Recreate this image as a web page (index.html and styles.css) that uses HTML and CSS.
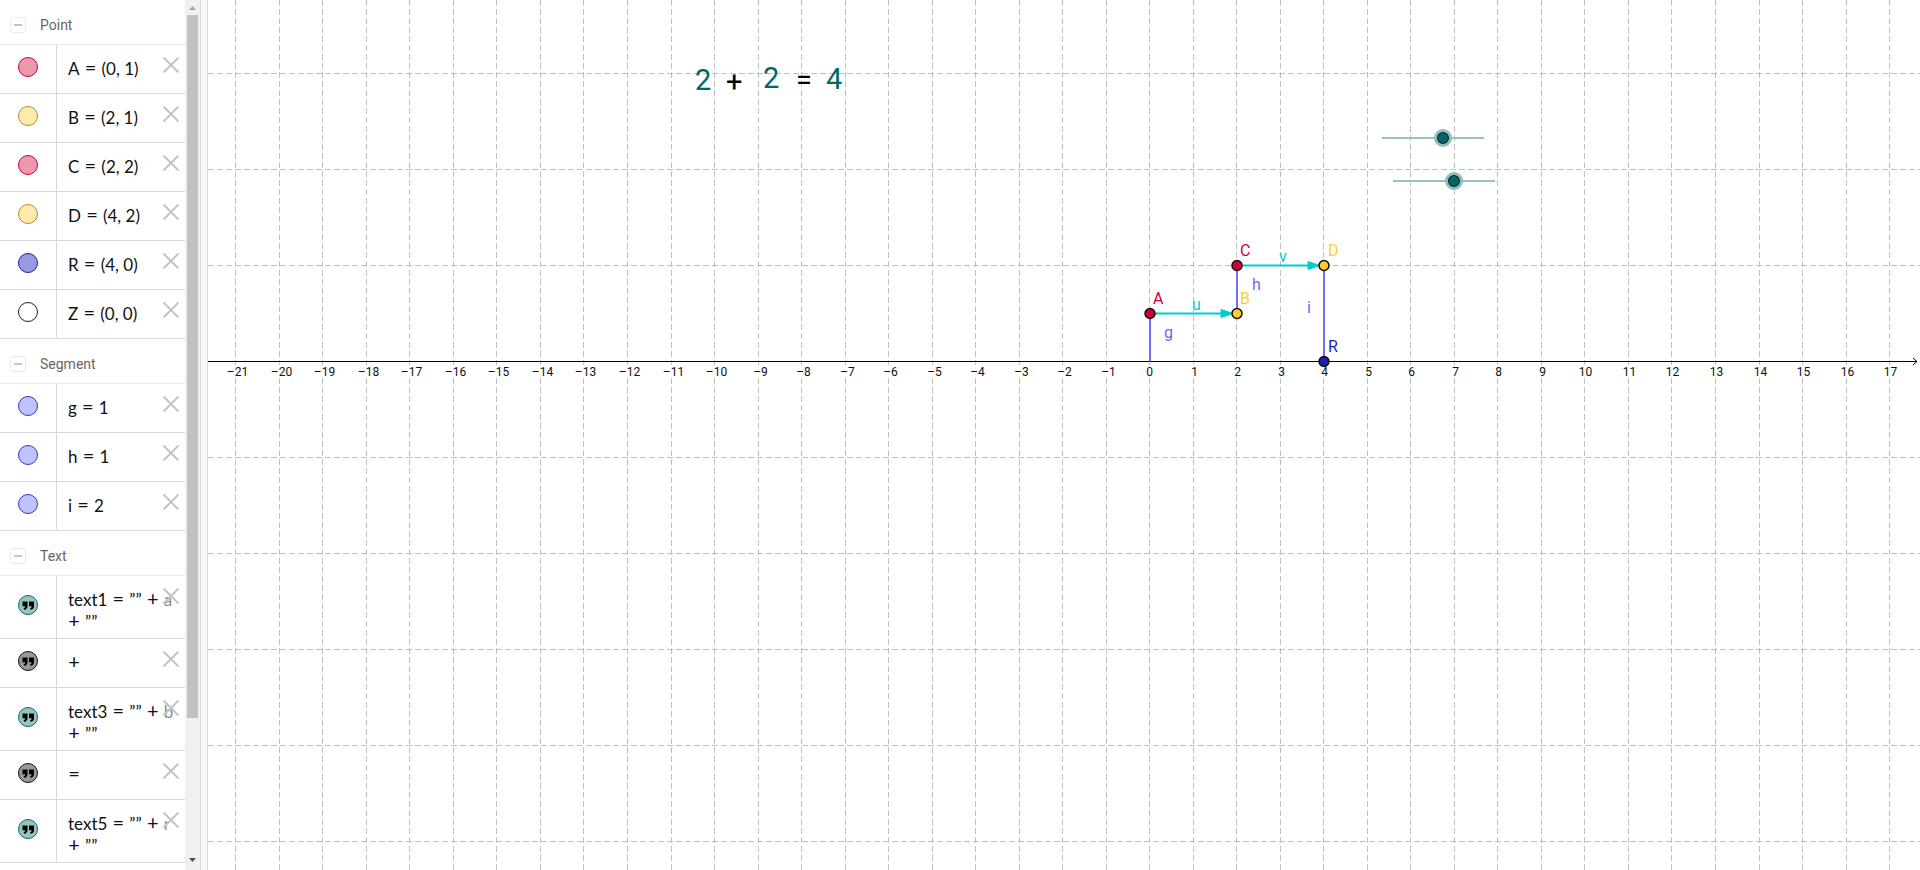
FILE: index.html
```html
<!DOCTYPE html>
<html lang="en">
<head>
<meta charset="utf-8">
<title>Graphing Calculator</title>
<link rel="stylesheet" href="styles.css">
</head>
<body>
<svg class="defs" aria-hidden="true">
  <symbol id="cross" viewBox="0 0 16 16"><path d="M.5.5l15 15M15.5.5l-15 15" fill="none" stroke="currentColor" stroke-width="2"/></symbol>
  <symbol id="minus" viewBox="0 0 16 16"><rect x=".5" y=".5" width="15" height="15" rx="2.5" fill="none" stroke="#ebebeb"/><path d="M4 8h8" stroke="#c4c4c4" stroke-width="2"/></symbol>
  <symbol id="quotes" viewBox="0 0 20 20"><path d="M4.500 6.500h5v5q-.4 3-3.300 3.300l-.7-1.400q1.700-.5 1.700-2.200h-2.700zM11 6.500h5v5q-.4 3-3.300 3.300l-.7-1.400q1.700-.5 1.700-2.200h-2.700z" fill="#000"/></symbol>
</svg>
<div class="app">
  <aside class="algebra">
    <div class="list" id="list"></div>
    <div class="scrollbar" aria-hidden="true">
      <svg class="arrow" viewBox="0 0 15 15"><path d="M4 10h7l-3.500-4z" fill="#a3a3a3"/></svg>
      <div class="rail"><div class="thumb"></div></div>
      <svg class="arrow" viewBox="0 0 15 15"><path d="M4 3h7l-3.500 4z" fill="#505050"/></svg>
    </div>
  </aside>
  <div class="splitter"></div>
  <main class="graph">
    <svg class="canvas" id="canvas" role="img" aria-label="Graphics view">
      <g id="grid" class="grid"></g>
      <path class="axis" d="M0 361.5H1709M1705 358l4 3.500l-4 3.500"/>
      <g id="ticks" class="ticks"></g>
      <g class="segment">
        <path d="M942 361.500v-48M1029 313.500v-48M1116 361.500v-96"/>
      </g>
      <g class="vector">
        <path class="halo" d="M942 313.500h75M1029 265.500h75"/>
        <path d="M942 313.500h78M1029 265.500h78"/>
        <path class="head" d="M1013 309.500l12 4l-12 4zM1100 261.500l12 4l-12 4z"/>
      </g>
      <g class="points">
        <circle class="red" cx="942" cy="313.500" r="5"/>
        <circle class="yellow" cx="1029" cy="313.500" r="5"/>
        <circle class="red" cx="1029" cy="265.500" r="5"/>
        <circle class="yellow" cx="1116" cy="265.500" r="5"/>
        <circle class="blue" cx="1116" cy="361.500" r="5"/>
      </g>
      <g class="labels">
        <text class="red" x="945" y="304">A</text>
        <text class="yellow" x="1032" y="304">B</text>
        <text class="red" x="1032" y="256">C</text>
        <text class="yellow" x="1120" y="256">D</text>
        <text class="blue" x="1120" y="352">R</text>
        <text class="aqua" x="984" y="310">u</text>
        <text class="aqua" x="1071" y="262">v</text>
        <text class="violet" x="956" y="338">g</text>
        <text class="violet" x="1044" y="290">h</text>
        <text class="violet" x="1099" y="313">i</text>
      </g>
      <g class="equation">
        <text class="num" x="487" y="90">2</text>
        <text x="518" y="92">+</text>
        <text class="num" x="555" y="88">2</text>
        <text x="588" y="90">=</text>
        <text class="num" x="618" y="89">4</text>
      </g>
    </svg>
    <input class="slider slider-a" type="range" min="-10" max="10" value="2" aria-label="a">
    <input class="slider slider-b" type="range" min="-10" max="10" value="2" aria-label="b">
  </main>
</div>
<script src="script.js"></script>
</body>
</html>
```
FILE: styles.css
```css
* { box-sizing: border-box; }
body { margin: 0; font-family: Roboto, sans-serif; background: #fff; }
.defs { position: absolute; width: 0; height: 0; }
.app { display: flex; height: 100vh; overflow: hidden; }

.algebra { display: flex; width: 200px; flex: none; }
.list { flex: 1; overflow: hidden; }
.group { display: flex; align-items: center; gap: 14px; height: 45px; margin: 0; padding: 5px 10px 0; border-bottom: 1px solid #ebebeb; font-size: 14px; font-weight: 400; color: #666; }
.group:not(:first-child) { padding-top: 6px; }
.toggle { display: block; padding: 0; border: 0; background: none; width: 16px; height: 16px; }
.toggle svg, .remove svg { display: block; width: 16px; height: 16px; }
.row { display: flex; position: relative; border-bottom: 1px solid #d9d9d9; }
.mark { display: flex; align-items: center; justify-content: center; width: 57px; padding-bottom: 4px; border-right: 1px solid #d9d9d9; }
.dot { display: block; width: 20px; height: 20px; padding: 0; border: 1px solid; border-radius: 50%; }
.dot svg { display: block; width: 20px; height: 20px; margin: -1px; }
.dot.red { background: #eb99ad; border-color: #cc0033; }
.dot.yellow { background: #ffebad; border-color: #b38f24; }
.dot.blue { background: #9999dd; border-color: #1f1faf; }
.dot.white { background: #fff; border-color: #222; }
.dot.violet { background: #c2c2ff; border-color: #3333cc; }
.dot.teal { background: #99c2c2; border-color: #007070; }
.dot.gray { background: #999; border-color: #111; }
.formula { flex: 1; min-height: 48px; padding: 13px 0 5px 11px; font: 17px/22px Lato, sans-serif; color: #111; white-space: nowrap; }
.formula .op { display: inline-block; width: 12px; margin: 0 5px; text-align: center; font-size: 20px; line-height: 16px; }
.formula .op.lead { margin-left: 0; }
.remove { position: absolute; top: 10px; right: 4px; padding: 2px; border: 0; background: rgba(255, 255, 255, .5); color: #c4c4c4; }

.scrollbar { display: flex; flex-direction: column; width: 15px; background: #f0f0f0; }
.arrow { width: 15px; height: 15px; flex: none; }
.rail { flex: 1; padding: 0 2px; }
.thumb { height: 83.7%; background: #c1c1c1; }
.splitter { flex: none; width: 8px; background: #f8f8f8; border: 1px solid #dcdcdc; border-width: 0 1px; }

.graph { position: relative; flex: 1; overflow: hidden; }
.canvas { display: block; width: 100%; height: 100%; }
.grid line { stroke: #c0c0c0; stroke-dasharray: 6 3; }
.axis { fill: none; stroke: #000; }
.ticks { font-size: 12px; text-anchor: middle; fill: #111; }
.ticks rect { fill: #fff; }
.segment path { fill: none; stroke: #6f6fff; stroke-width: 2; }
.vector path { fill: none; stroke: #00cccc; }
.vector .halo { stroke-width: 3; opacity: .5; }
.vector .head { fill: #00cccc; }
.points circle { stroke: #111; stroke-width: 1.5; }
.labels { font-size: 16px; }
.red { fill: #cc0033; }
.yellow { fill: #ffcc33; }
.blue { fill: #1f1faf; }
.aqua { fill: #00cccc; }
.violet { fill: #6666ff; }
.equation { font-size: 29px; fill: #000; }
.equation .num { fill: #006666; }

.slider { position: absolute; width: 120px; height: 18px; margin: 0; appearance: none; background: linear-gradient(#99c2c2, #99c2c2) center / 102px 2px no-repeat; }
.slider::-webkit-slider-thumb { appearance: none; width: 18px; height: 18px; border: 3px solid #8fbcbc; border-radius: 50%; background: #006666; box-shadow: inset 0 0 0 1px #111; }
.slider-a { left: 1165px; top: 129px; }
.slider-b { left: 1176px; top: 172px; }
```
FILE: script.js
```js
const groups = [
  ["Point", [["red", "A = (0, 1)"], ["yellow", "B = (2, 1)"], ["red", "C = (2, 2)"], ["yellow", "D = (4, 2)"], ["blue", "R = (4, 0)"], ["white", "Z = (0, 0)"]]],
  ["Segment", [["violet", "g = 1"], ["violet", "h = 1"], ["violet", "i = 2"]]],
  ["Text", [["teal", 'text1 = "" + a\n+ ""'], ["gray", "+"], ["teal", 'text3 = "" + b\n+ ""'], ["gray", "="], ["teal", 'text5 = "" + r\n+ ""']]]
];

const formula = text => text.split("\n")
  .map(line => "<div>" + line.replace(/""/g, "””").replace(/ ?([=+]) ?/g,
    (match, sign, at) => `<span class="op${at ? "" : " lead"}">${sign}</span>`) + "</div>")
  .join("");

document.getElementById("list").innerHTML = groups.map(([name, rows]) =>
  `<h2 class="group"><button class="toggle" aria-label="Collapse ${name}"><svg><use href="#minus"/></svg></button>${name}</h2>` +
  rows.map(([color, text]) =>
    `<div class="row"><div class="mark"><button class="dot ${color}" aria-label="Show or hide">${name === "Text" ? '<svg><use href="#quotes"/></svg>' : ""}</button></div>` +
    `<div class="formula">${formula(text)}</div>` +
    `<button class="remove" aria-label="Delete"><svg><use href="#cross"/></svg></button></div>`).join("")
).join("");

const originX = 941.74, unit = 43.52, axisY = 361.5;
let grid = "", ticks = "";
for (let n = -21; n <= 17; n++) {
  const x = Math.floor(originX + n * unit) + 0.5;
  const shift = n < 0 ? 2 : n > 0 ? 1 : 0;
  grid += `<line x1="${x}" x2="${x}" y1="0" y2="100%"/>`;
  ticks += `<rect x="${x - 3}" y="365" width="6" height="13"/><text x="${x + shift}" y="376">${n < 0 ? "–" + -n : n}</text>`;
}
for (let k = -3; k <= 5; k++) {
  if (k) grid += `<line x1="0" x2="100%" y1="${axisY + k * 96}" y2="${axisY + k * 96}"/>`;
}
document.getElementById("grid").innerHTML = grid;
document.getElementById("ticks").innerHTML = ticks;
```
